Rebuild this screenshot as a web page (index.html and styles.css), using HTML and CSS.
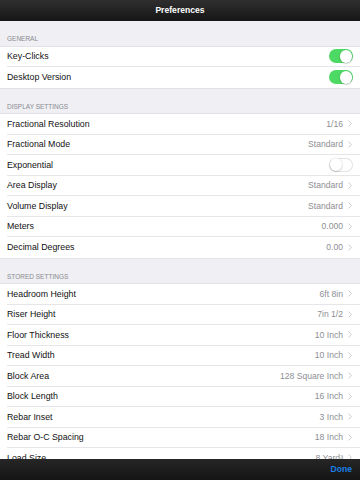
FILE: index.html
```html
<!DOCTYPE html>
<html>
<head>
<meta charset="utf-8">
<link rel="stylesheet" href="styles.css">
</head>
<body>
<div class="app">
  <header class="navbar"><span class="title">Preferences</span></header>
  <main class="content">
    <div class="section-header"><span>GENERAL</span></div>
    <div class="group">
      <div class="row"><div class="row-body"><span class="label">Key-Clicks</span><span class="toggle on"><span class="knob"></span></span></div></div>
      <div class="row last"><div class="row-body"><span class="label">Desktop Version</span><span class="toggle on"><span class="knob"></span></span></div></div>
    </div>

    <div class="section-header"><span>DISPLAY SETTINGS</span></div>
    <div class="group">
      <div class="row"><div class="row-body"><span class="label">Fractional Resolution</span><span class="value">1/16</span><svg class="chev" viewBox="0 0 4 7"><path d="M0.6 0.6 L3.4 3.5 L0.6 6.4"/></svg></div></div>
      <div class="row"><div class="row-body"><span class="label">Fractional Mode</span><span class="value">Standard</span><svg class="chev" viewBox="0 0 4 7"><path d="M0.6 0.6 L3.4 3.5 L0.6 6.4"/></svg></div></div>
      <div class="row"><div class="row-body"><span class="label">Exponential</span><span class="toggle off"><span class="knob"></span></span></div></div>
      <div class="row"><div class="row-body"><span class="label">Area Display</span><span class="value">Standard</span><svg class="chev" viewBox="0 0 4 7"><path d="M0.6 0.6 L3.4 3.5 L0.6 6.4"/></svg></div></div>
      <div class="row"><div class="row-body"><span class="label">Volume Display</span><span class="value">Standard</span><svg class="chev" viewBox="0 0 4 7"><path d="M0.6 0.6 L3.4 3.5 L0.6 6.4"/></svg></div></div>
      <div class="row"><div class="row-body"><span class="label">Meters</span><span class="value">0.000</span><svg class="chev" viewBox="0 0 4 7"><path d="M0.6 0.6 L3.4 3.5 L0.6 6.4"/></svg></div></div>
      <div class="row last"><div class="row-body"><span class="label">Decimal Degrees</span><span class="value">0.00</span><svg class="chev" viewBox="0 0 4 7"><path d="M0.6 0.6 L3.4 3.5 L0.6 6.4"/></svg></div></div>
    </div>

    <div class="section-header"><span>STORED SETTINGS</span></div>
    <div class="group">
      <div class="row"><div class="row-body"><span class="label">Headroom Height</span><span class="value">6ft 8in</span><svg class="chev" viewBox="0 0 4 7"><path d="M0.6 0.6 L3.4 3.5 L0.6 6.4"/></svg></div></div>
      <div class="row"><div class="row-body"><span class="label">Riser Height</span><span class="value">7in 1/2</span><svg class="chev" viewBox="0 0 4 7"><path d="M0.6 0.6 L3.4 3.5 L0.6 6.4"/></svg></div></div>
      <div class="row"><div class="row-body"><span class="label">Floor Thickness</span><span class="value">10 Inch</span><svg class="chev" viewBox="0 0 4 7"><path d="M0.6 0.6 L3.4 3.5 L0.6 6.4"/></svg></div></div>
      <div class="row"><div class="row-body"><span class="label">Tread Width</span><span class="value">10 Inch</span><svg class="chev" viewBox="0 0 4 7"><path d="M0.6 0.6 L3.4 3.5 L0.6 6.4"/></svg></div></div>
      <div class="row"><div class="row-body"><span class="label">Block Area</span><span class="value">128 Square Inch</span><svg class="chev" viewBox="0 0 4 7"><path d="M0.6 0.6 L3.4 3.5 L0.6 6.4"/></svg></div></div>
      <div class="row"><div class="row-body"><span class="label">Block Length</span><span class="value">16 Inch</span><svg class="chev" viewBox="0 0 4 7"><path d="M0.6 0.6 L3.4 3.5 L0.6 6.4"/></svg></div></div>
      <div class="row"><div class="row-body"><span class="label">Rebar Inset</span><span class="value">3 Inch</span><svg class="chev" viewBox="0 0 4 7"><path d="M0.6 0.6 L3.4 3.5 L0.6 6.4"/></svg></div></div>
      <div class="row"><div class="row-body"><span class="label">Rebar O-C Spacing</span><span class="value">18 Inch</span><svg class="chev" viewBox="0 0 4 7"><path d="M0.6 0.6 L3.4 3.5 L0.6 6.4"/></svg></div></div>
      <div class="row"><div class="row-body"><span class="label">Load Size</span><span class="value">8 Yard³</span><svg class="chev" viewBox="0 0 4 7"><path d="M0.6 0.6 L3.4 3.5 L0.6 6.4"/></svg></div></div>
    </div>
  </main>
  <footer class="toolbar"><span class="done">Done</span></footer>
</div>
</body>
</html>
```
FILE: styles.css
```css
* { box-sizing: border-box; }
html, body { margin: 0; padding: 0; }
body {
  width: 360px;
  height: 480px;
  overflow: hidden;
  font-family: "Liberation Sans", Arial, sans-serif;
  background: #efeff4;
}
.app {
  display: flex;
  flex-direction: column;
  height: 480px;
}
.navbar {
  height: 21px;
  flex: 0 0 21px;
  background: linear-gradient(#2f2f2f, #161616);
  display: flex;
  align-items: center;
  justify-content: center;
}
.title {
  color: #fff;
  font-size: 8.6px;
  font-weight: bold;
  line-height: 9px;
}
.content {
  flex: 1 1 auto;
  overflow: hidden;
  background: #efeff4;
}
.section-header {
  height: 25.5px;
  display: flex;
  align-items: flex-end;
  padding: 0 7px 4px;
  font-size: 6.5px;
  line-height: 6.5px;
  color: #8a8a8f;
}
.group {
  background: #fff;
  border-top: 1px solid #e2e2e6;
  border-bottom: 1px solid #e2e2e6;
  margin-top: -1px;
}
.row {
  height: 20.5px;
  padding-left: 7px;
}
.row-body {
  height: 100%;
  display: flex;
  align-items: center;
  padding-right: 8px;
  border-bottom: 1px solid #e6e6ea;
}
.row.last .row-body { border-bottom: none; }
.label {
  flex: 1 1 auto;
  font-size: 8.8px;
  line-height: 9px;
  color: #111;
  padding-top: 1px;
}
.value {
  font-size: 8.6px;
  line-height: 9px;
  color: #8e8e93;
  margin-right: 5px;
  padding-top: 1px;
}
.chev {
  width: 4px;
  height: 7px;
  fill: none;
  stroke: #c4c4c9;
  stroke-width: 0.9;
}
.toggle {
  position: relative;
  width: 24px;
  height: 14px;
  border-radius: 7px;
  margin-right: -1px;
}
.toggle.on { background: #4cd964; }
.toggle.off {
  background: #fff;
  box-shadow: inset 0 0 0 1px #e3e3e6;
}
.knob {
  position: absolute;
  top: 0.6px;
  width: 12.8px;
  height: 12.8px;
  border-radius: 50%;
  background: #fff;
  box-shadow: 0 0.6px 1.5px rgba(0,0,0,0.35);
}
.toggle.on .knob { right: 0.6px; }
.toggle.off .knob { left: 0.6px; }
.toolbar {
  height: 21px;
  flex: 0 0 21px;
  background: linear-gradient(#262626, #141414);
  display: flex;
  align-items: center;
  justify-content: flex-end;
  padding-right: 8px;
}
.done {
  color: #1a7fe8;
  font-size: 8.6px;
  font-weight: bold;
  line-height: 9px;
}
```
